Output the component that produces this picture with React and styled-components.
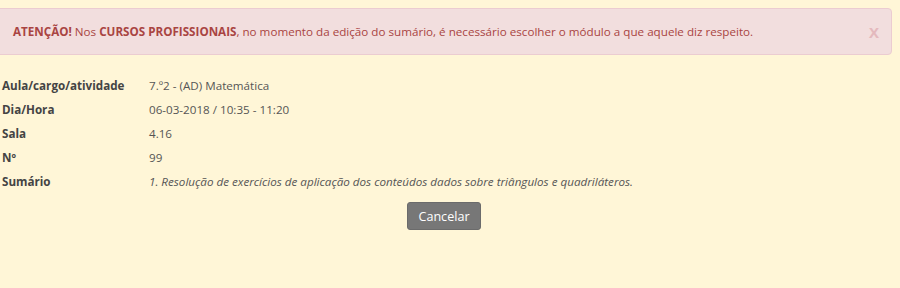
import React from 'react';
import styled, { createGlobalStyle } from 'styled-components';

const GlobalStyle = createGlobalStyle`
  html, body {
    margin: 0;
    padding: 0;
    background: #fff6d7;
    font-family: 'Open Sans', 'Liberation Sans', sans-serif;
    font-size: 11.65px;
    color: #555;
  }
`;

const Page = styled.div`
  width: 900px;
  height: 288px;
  overflow: hidden;
  padding-top: 8px;
  box-sizing: border-box;
`;

const Alert = styled.div`
  display: flex;
  align-items: center;
  justify-content: space-between;
  height: 47px;
  box-sizing: border-box;
  margin: 0 8px 0 -6px;
  padding: 0 12px 0 18px;
  background: #f2dede;
  border: 1px solid #ebccd1;
  border-radius: 4px;
  color: #a94442;
`;

const Close = styled.span`
  font-weight: 700;
  font-size: 15px;
  color: #e4b9bd;
`;

const Details = styled.div`
  display: grid;
  grid-template-columns: 147px 1fr;
  grid-auto-rows: 24px;
  align-items: center;
  margin: 18px 0 0 2px;
`;

const Label = styled.div`
  font-weight: 700;
  color: #444;
`;

const Value = styled.div`
  color: #555;
  font-style: ${props => (props.italic ? 'italic' : 'normal')};
`;

const Actions = styled.div`
  display: flex;
  justify-content: center;
  width: 888px;
  margin-top: 9px;
`;

const Button = styled.button`
  height: 28px;
  padding: 0 10px;
  background: #777;
  border: 1px solid #6b6b6b;
  border-radius: 3px;
  color: #fff;
  font-family: 'Open Sans', 'Liberation Sans', sans-serif;
  font-size: 12.6px;
`;

const rows = [
  ['Aula/cargo/atividade', '7.º2 - (AD) Matemática'],
  ['Dia/Hora', '06-03-2018 / 10:35 - 11:20'],
  ['Sala', '4.16'],
  ['Nº', '99'],
  ['Sumário', '1. Resolução de exercícios de aplicação dos conteúdos dados sobre triângulos e quadriláteros.', true],
];

const App = () => (
  <Page>
    <GlobalStyle />
    <Alert>
      <span>
        <b>ATENÇÃO!</b> Nos <b>CURSOS PROFISSIONAIS</b>, no momento da edição do sumário, é necessário escolher o módulo a que aquele diz respeito.
      </span>
      <Close>X</Close>
    </Alert>
    <Details>
      {rows.map(([label, value, italic]) => (
        <React.Fragment key={label}>
          <Label>{label}</Label>
          <Value italic={italic}>{value}</Value>
        </React.Fragment>
      ))}
    </Details>
    <Actions>
      <Button>Cancelar</Button>
    </Actions>
  </Page>
);

export default App;
